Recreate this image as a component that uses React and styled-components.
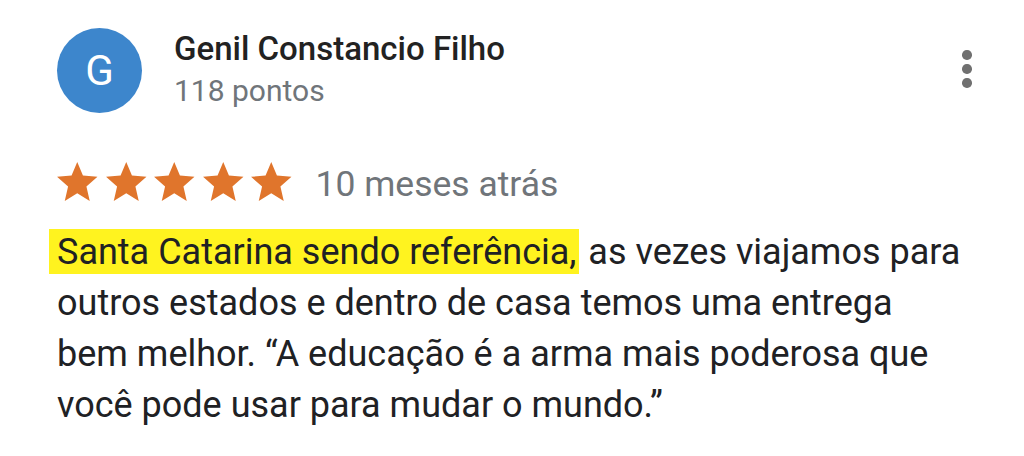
import styled, { createGlobalStyle } from 'styled-components'

const GlobalStyle = createGlobalStyle`
	html, body {
		margin: 0;
		padding: 0;
		background: #fff;
	}
	body {
		font-family: Roboto, 'Noto Sans', sans-serif;
		-webkit-font-smoothing: antialiased;
	}
`

const Card = styled.div`
	width: 1024px;
	height: 456px;
	box-sizing: border-box;
	padding: 28px 0 0 57px;
	background: #fff;
	overflow: hidden;
`

const Header = styled.div`
	display: flex;
	align-items: flex-start;
`

const Avatar = styled.div`
	width: 85px;
	height: 85px;
	border-radius: 50%;
	background: #3d86cc;
	color: #fff;
	display: flex;
	align-items: center;
	justify-content: center;
	font-size: 42px;
	font-weight: 400;
	flex-shrink: 0;
`

const Who = styled.div`
	margin-left: 32px;
	flex: 1;
	padding-top: 1px;
`

const Name = styled.div`
	font-size: 33px;
	font-weight: 500;
	line-height: 40px;
	color: #222;
`

const Points = styled.div`
	font-size: 30px;
	line-height: 40px;
	margin-top: 2px;
	color: #70757a;
`

const Menu = styled.button`
	border: 0;
	background: none;
	padding: 0;
	margin: 22px 51px 0 0;
	width: 12px;
	display: flex;
	flex-direction: column;
	align-items: center;
	gap: 4.5px;

	span {
		width: 9.5px;
		height: 9.5px;
		border-radius: 50%;
		background: #707070;
	}
`

const RatingRow = styled.div`
	display: flex;
	align-items: center;
	margin-top: 45px;
	margin-left: -4px;
	height: 49px;
`

const Stars = styled.div`
	display: flex;
	margin-right: 20px;

	svg {
		width: 48.5px;
		height: 49px;
		fill: #e0752c;
	}
`

const When = styled.span`
	font-size: 35.5px;
	color: #70757a;
	padding-top: 3px;
`

const Body = styled.p`
	margin: 20px 0 0;
	width: 905px;
	font-size: 36px;
	line-height: 51px;
	color: #202124;
`

const Highlight = styled.mark`
	background: #fff31f;
	color: inherit;
	padding: 2px 3px 1px 8px;
	margin-left: -8px;
`

const Star = () => (
	<svg viewBox='0 0 24 24' preserveAspectRatio='none'>
		<path d='M12 17.27L18.18 21l-1.64-7.03L22 9.24l-7.19-.61L12 2 9.19 8.63 2 9.24l5.46 4.73L5.82 21z' />
	</svg>
)

export default function App() {
	return (
		<>
			<GlobalStyle />
			<Card>
				<Header>
					<Avatar>G</Avatar>
					<Who>
						<Name>Genil Constancio Filho</Name>
						<Points>118 pontos</Points>
					</Who>
					<Menu aria-label='mais opções'>
						<span />
						<span />
						<span />
					</Menu>
				</Header>
				<RatingRow>
					<Stars>
						{[0, 1, 2, 3, 4].map((i) => (
							<Star key={i} />
						))}
					</Stars>
					<When>10 meses atrás</When>
				</RatingRow>
				<Body>
					<Highlight>Santa Catarina sendo referência,</Highlight> as vezes viajamos para outros estados e
					dentro de casa temos uma entrega bem melhor. “A educação é a arma mais poderosa que você pode
					usar para mudar o mundo.”
				</Body>
			</Card>
		</>
	)
}
